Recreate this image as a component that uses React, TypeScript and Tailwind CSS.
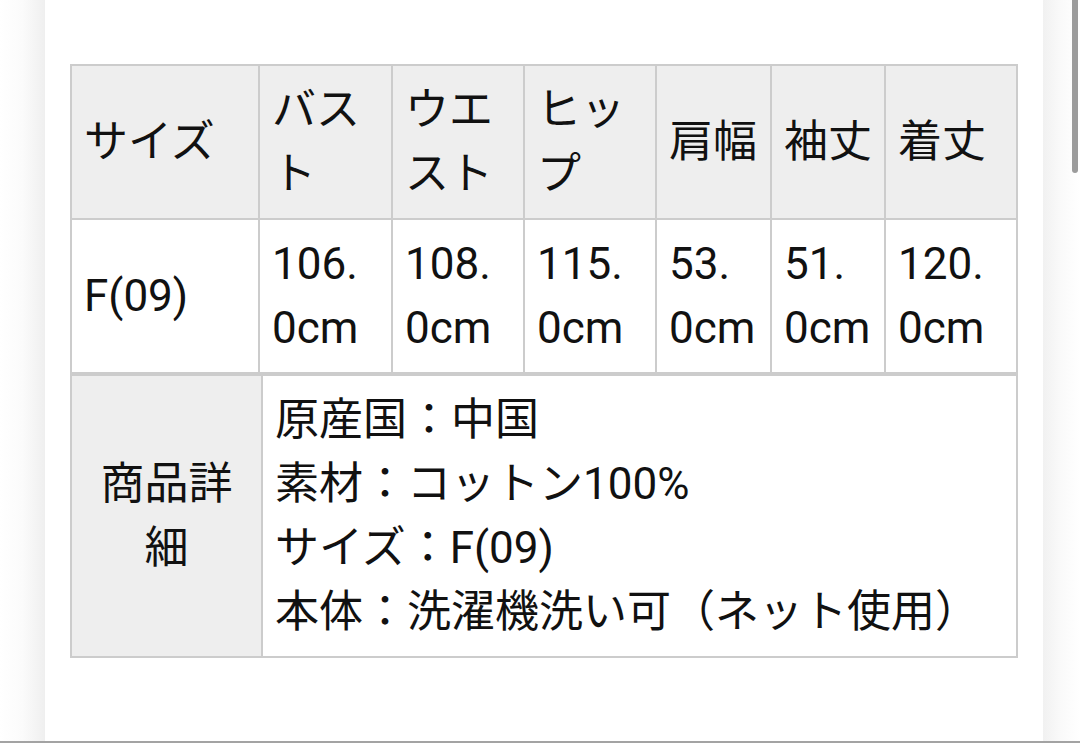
import React from "react";

const font = { fontFamily: 'Roboto, "Noto Sans CJK JP", sans-serif' };

function Cell({
  children,
  head = false,
  center = false,
}: {
  children: React.ReactNode;
  head?: boolean;
  center?: boolean;
}) {
  return (
    <div
      className={
        "flex items-center px-[12px] py-[12px] whitespace-nowrap " +
        (head ? "bg-[#eeeeee] " : "bg-white ") +
        (center ? "justify-center text-center" : "justify-start")
      }
    >
      <div>{children}</div>
    </div>
  );
}

export default function App() {
  const heads: React.ReactNode[] = [
    "サイズ",
    <>
      バス
      <br />ト
    </>,
    <>
      ウエ
      <br />
      スト
    </>,
    <>
      ヒッ
      <br />プ
    </>,
    "肩幅",
    "袖丈",
    "着丈",
  ];
  const vals = ["106.", "108.", "115.", "53.", "51.", "120."];
  return (
    <div
      className="relative flex w-[1080px] h-[743px] overflow-hidden bg-white text-[44px] leading-[64px] text-[#111111]"
      style={font}
    >
      <div className="w-[45px] h-full bg-gradient-to-r from-white via-[#fbfbfb] to-[#efefef]" />
      <div className="flex-1 h-full bg-white px-[25px] pt-[64px]">
        <div className="grid grid-cols-[186px_131px_130px_130px_113px_112px_130px] gap-[2px] bg-[#cccccc] p-[2px]">
          {heads.map((h, i) => (
            <Cell key={"h" + i} head>
              {h}
            </Cell>
          ))}
          <Cell>F(09)</Cell>
          {vals.map((v, i) => (
            <Cell key={"v" + i}>
              {v}
              <br />
              0cm
            </Cell>
          ))}
        </div>
        <div className="grid grid-cols-[189px_753px] gap-[2px] bg-[#cccccc] p-[2px]">
          <Cell head center>
            商品詳
            <br />細
          </Cell>
          <Cell>
            原産国：中国
            <br />
            素材：コットン100%
            <br />
            サイズ：F(09)
            <br />
            本体：洗濯機洗い可（ネット使用）
          </Cell>
        </div>
      </div>
      <div className="w-[37px] h-full bg-gradient-to-r from-[#f1f1f1] via-[#fafafa] to-white" />
      <div className="absolute right-[2px] top-0 w-[6px] h-[173px] rounded-b-full bg-[#9c9c9c]" />
      <div className="absolute left-0 right-0 bottom-0 h-[2px] bg-[#a3a3a3]" />
    </div>
  );
}
